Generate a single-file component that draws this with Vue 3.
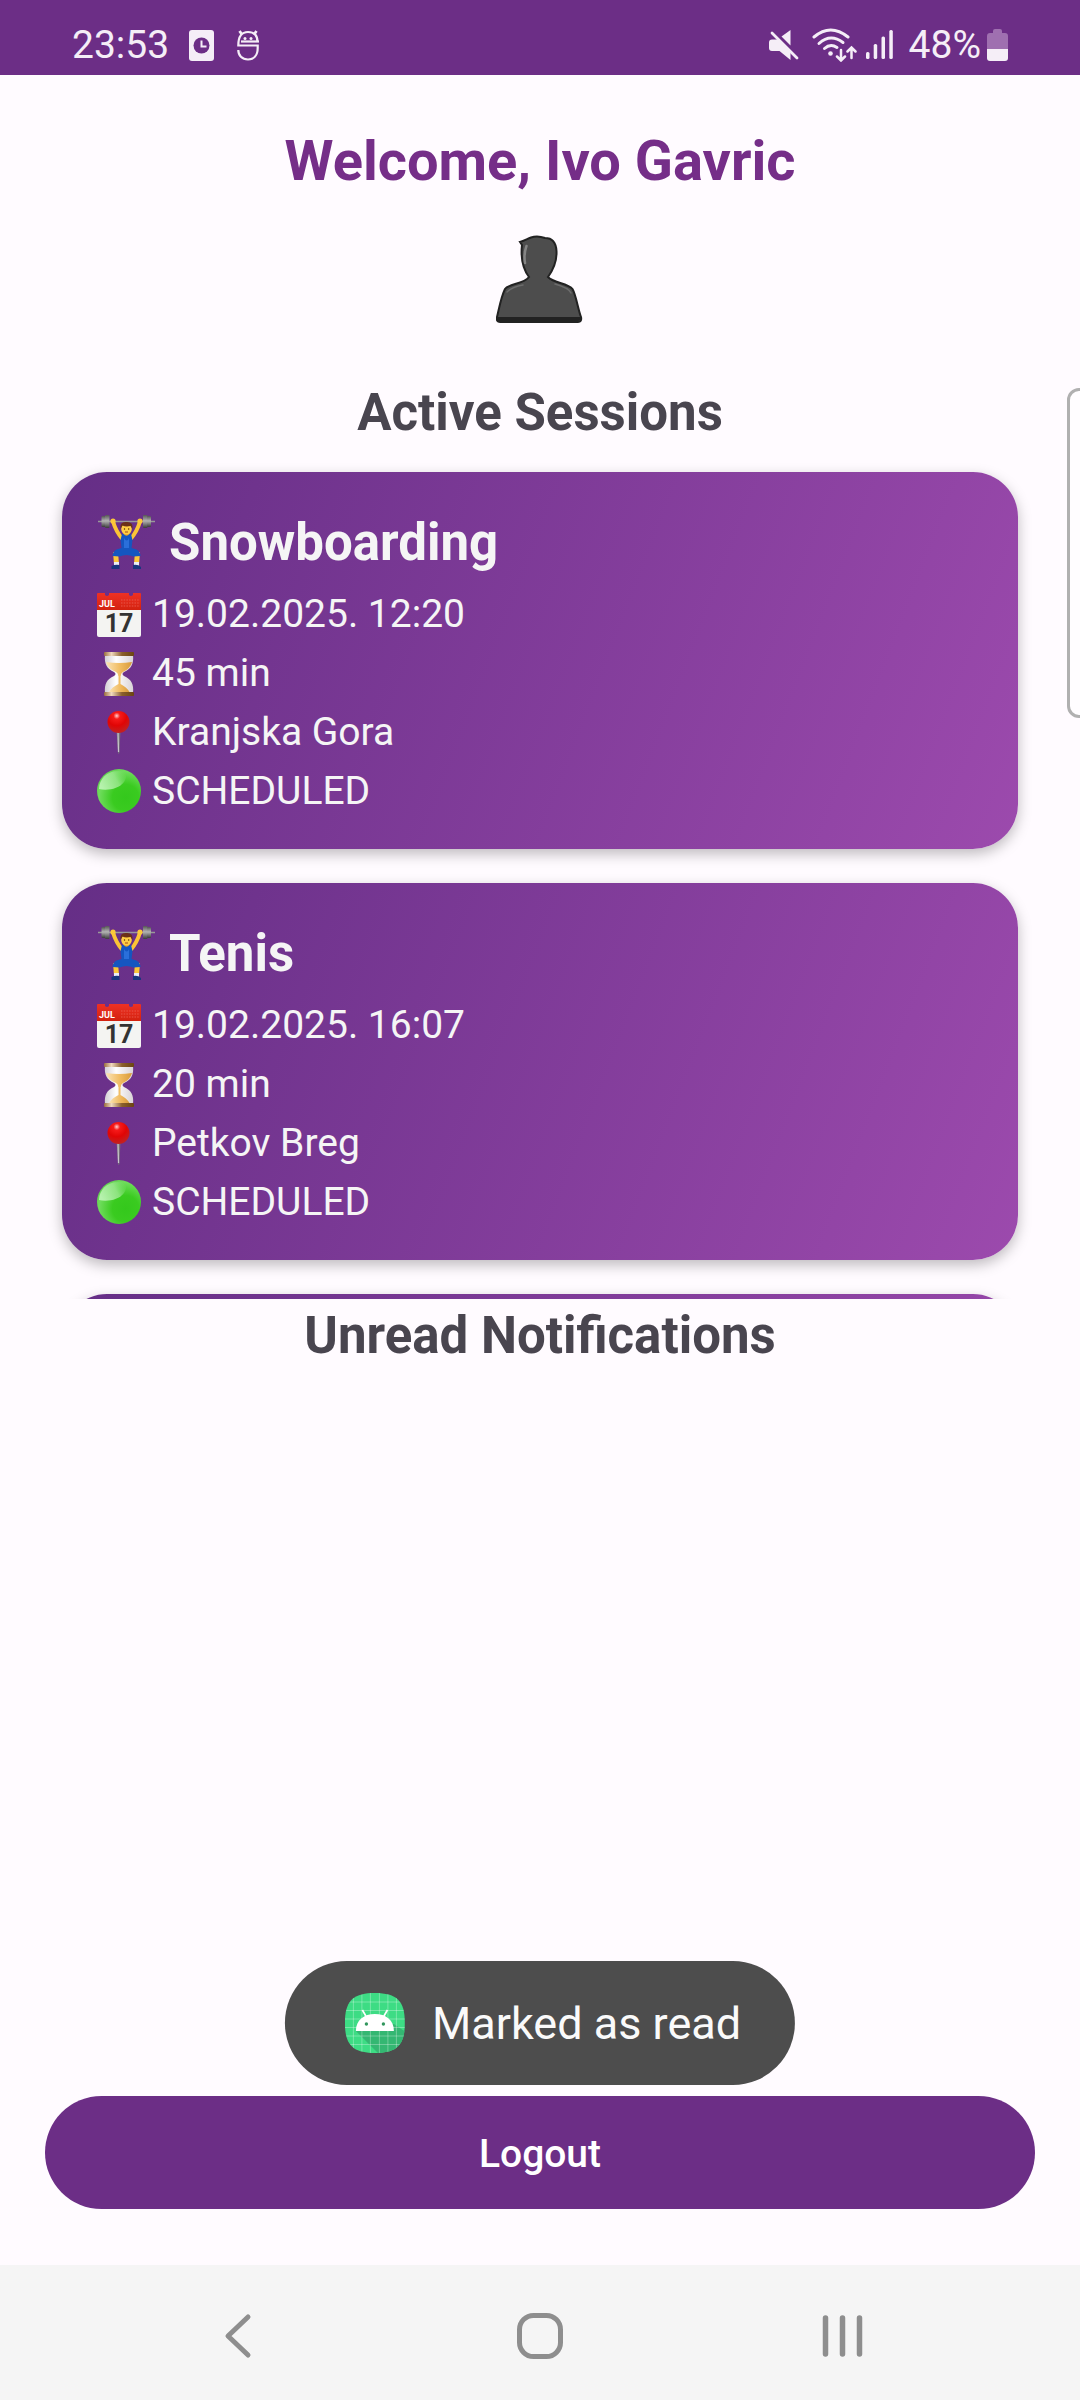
<script setup>
const sessions = [
  { id: 1, name: 'Snowboarding', date: '19.02.2025. 12:20', length: '45 min', place: 'Kranjska Gora', status: 'SCHEDULED' },
  { id: 2, name: 'Tenis', date: '19.02.2025. 16:07', length: '20 min', place: 'Petkov Breg', status: 'SCHEDULED' },
]
const rows = ['date', 'length', 'place', 'status']
</script>

<template>
  <div class="screen">
    <!-- Gradients shared by the card icons -->
    <svg class="defs" width="0" height="0" aria-hidden="true">
      <defs>
        <linearGradient id="weight" x1="0" x2="0" y1="0" y2="1">
          <stop offset="0" stop-color="#555" /><stop offset=".45" stop-color="#b4b4b4" /><stop offset="1" stop-color="#3a3a3a" />
        </linearGradient>
        <linearGradient id="brass" x1="0" x2="1" y1="0" y2="0">
          <stop offset="0" stop-color="#9a6d3f" /><stop offset=".25" stop-color="#f0d9bd" /><stop offset=".6" stop-color="#8a5f2c" /><stop offset="1" stop-color="#6b4412" />
        </linearGradient>
        <linearGradient id="glass" x1="0" x2="1" y1="0" y2="0">
          <stop offset="0" stop-color="#d4cfd4" /><stop offset=".4" stop-color="#fff" /><stop offset="1" stop-color="#d9d3d6" />
        </linearGradient>
        <linearGradient id="sand" x1="0" x2="1" y1="0" y2="0">
          <stop offset="0" stop-color="#fbe3b4" /><stop offset=".55" stop-color="#f0bb60" /><stop offset="1" stop-color="#d99a3a" />
        </linearGradient>
        <radialGradient id="pin" cx=".42" cy=".22" r=".75">
          <stop offset="0" stop-color="#ffd0d0" /><stop offset=".2" stop-color="#f71a1a" /><stop offset=".6" stop-color="#e00505" /><stop offset="1" stop-color="#c22020" />
        </radialGradient>
        <radialGradient id="ball" cx=".65" cy=".65" r=".75">
          <stop offset="0" stop-color="#34c81c" /><stop offset=".4" stop-color="#3acb20" /><stop offset=".8" stop-color="#6fdc5c" /><stop offset="1" stop-color="#5fcb4e" />
        </radialGradient>
        <linearGradient id="shine" x1="0" x2="1" y1=".6" y2=".2">
          <stop offset="0" stop-color="#b6f2ad" /><stop offset=".6" stop-color="#9ce890" stop-opacity=".8" /><stop offset="1" stop-color="#6fdc5e" stop-opacity=".2" />
        </linearGradient>
        <linearGradient id="page" x1="0" x2="0" y1="0" y2="1">
          <stop offset="0" stop-color="#ee3124" /><stop offset="1" stop-color="#d3220f" />
        </linearGradient>
      </defs>
    </svg>

    <header class="status">
      <div class="status-side">
        <time class="clock">23:53</time>
        <svg class="alarm" width="25" height="31" viewBox="0 0 25 31" aria-hidden="true">
          <rect width="25" height="31" rx="3" fill="#f5eef7" />
          <circle cx="12.500" cy="15.500" r="8" fill="#6c2e86" />
          <path d="M12.500 10.500v6h5" fill="none" stroke="#f5eef7" stroke-width="2" />
        </svg>
        <svg width="22" height="31" viewBox="0 0 22 31" aria-hidden="true">
          <g fill="none" stroke="#f5eef7" stroke-width="2.200">
            <path d="M20.500 12C20.500 5 17 2 11 2S1.300 6 1.300 15.500h19.400V18c0 7-3.700 11.500-9.700 11.500S1.300 25.500 1.300 20" />
            <path d="M4 11.500h18" />
            <path d="M2.500 1l2.500 3.500M19.500 1L17 4.500" stroke-width="2.800" />
          </g>
          <circle cx="8" cy="8.500" r="1.500" fill="#f5eef7" /><circle cx="14" cy="8.500" r="1.500" fill="#f5eef7" />
        </svg>
      </div>
      <div class="status-side">
        <svg width="30" height="30" viewBox="0 0 30 30" fill="#f5eef7" aria-hidden="true">
          <path d="M21.500 0v15.500L12.500 6.500z" />
          <path d="M3 9.500h6L21.500 22v8L10.500 21H3q-3 0-3-3v-5.500q0-3 3-3z" />
          <path d="M3 3l25 25" stroke="#f5eef7" stroke-width="2.800" stroke-linecap="round" />
        </svg>
        <svg class="wifi" width="46" height="34" viewBox="0 0 46 34" fill="none" stroke="#f5eef7" stroke-linecap="round" aria-hidden="true">
          <g stroke-width="3">
            <path d="M2 9Q18.500-5 36 9" /><path d="M7 15.500Q18.500 5 31 14.500" /><path d="M12.500 20.500Q18.500 15 25 19.500" />
          </g>
          <circle cx="18.500" cy="25.500" r="2.300" fill="#f5eef7" stroke="none" />
          <path d="M29 22v10M25 28.500l4 4 4-4M39.500 30V20M35.500 23.500l4-4 4 4" stroke-width="2.500" />
        </svg>
        <svg class="signal" width="27" height="30" viewBox="0 0 27 30" fill="#f5eef7" aria-hidden="true">
          <rect y="22" width="3.500" height="7" rx="1.500" /><rect x="7.700" y="14" width="3.500" height="15" rx="1.500" />
          <rect x="15.500" y="6.500" width="3.500" height="22.500" rx="1.500" /><rect x="23.300" width="3.500" height="29" rx="1.500" />
        </svg>
        <span>48%</span>
        <svg class="battery" width="21" height="32" viewBox="0 0 21 32" aria-hidden="true">
          <path d="M6 4V2q0-2 2-2h5q2 0 2 2v2h3q3 0 3 3v13H0V7q0-3 3-3z" fill="#9f70b0" />
          <path d="M0 20h21v9q0 3-3 3H3q-3 0-3-3z" fill="#f5eef7" />
        </svg>
      </div>
    </header>

    <main class="content">
      <h1>Welcome, Ivo Gavric</h1>
      <svg class="avatar" width="88" height="88" viewBox="0 0 88 88" role="img" aria-label="Profile">
        <path d="M24 7C28 6 31 4 35 2.500c4-1.500 10-1 14 .5 7 0 11 5 11.500 13C61 26 57 35 52 42c5 6 20 6 24.500 12C80 60 82 74 85 82q1 5-3 5H4q-4 0-3-5C3 74 5 62 9 54c3-5 19-5 24-12C27 34 24.500 24 26 10z" fill="#4d4d4d" stroke="#222" stroke-width="2" />
        <path d="M1 82h84q0 4-3 4H4q-4 0-3-4z" fill="#222" />
        <path d="M30.500 11q-3 8-1.500 17" fill="none" stroke="#858585" stroke-width="2.500" stroke-linecap="round" />
        <path d="M11 57q5-5 16-7M59 49q14 4 16 9" fill="none" stroke="#6c6c6c" stroke-width="1.500" stroke-linecap="round" />
      </svg>

      <h2 class="first">Active Sessions</h2>
      <section class="list" aria-label="Active Sessions">
        <article v-for="s in sessions" :key="s.id" class="card">
          <h3>
            <svg width="60" height="56" viewBox="0 0 60 56" aria-hidden="true">
              <path d="M2 6.500h57" stroke="#999" stroke-width="1.500" />
              <g fill="url(#weight)">
                <rect x="5.500" y="1" width="4" height="11" rx="1" /><rect x="9" y="0" width="4.500" height="13" rx="1" />
                <rect x="47" y="0" width="4.500" height="13" rx="1" /><rect x="51" y="1" width="4" height="11" rx="1" />
              </g>
              <path d="M17 6.500q3 10 9 17M44 6.500q-3 10-9 17" fill="none" stroke="#fcc436" stroke-width="4" stroke-linecap="round" />
              <circle cx="17" cy="6" r="2.600" fill="#fcc83a" /><circle cx="44" cy="6" r="2.600" fill="#fcc83a" />
              <path d="M27.500 17h6v6h-6z" fill="#e89e1f" />
              <ellipse cx="30.500" cy="14" rx="5.300" ry="5.500" fill="#ffcd43" />
              <path d="M24.500 14q-1-7 5-7 8-1 7 7l-2-3q-5 1-8-.5z" fill="#6b3018" />
              <path d="M29 17h3" stroke="#a34b1a" stroke-width="1" /><circle cx="28.500" cy="14" r=".7" fill="#4a2509" /><circle cx="32.700" cy="14" r=".7" fill="#4a2509" />
              <path d="M19.500 37l1 12M41.500 37l-1 12" stroke="#fcc83a" stroke-width="5" />
              <path d="M26 19h1.500q3 3.500 6 0H35l1.500 6-1 8 5 1.500q4 2.500 4 6.500l-7 .5q-3.500-1.500-7-1.500t-7 1.500l-7-.5q0-4 4-6.500l5-1.500-1-8z" fill="#1556c0" />
              <path d="M28 23q3 5 5 0v10h-5z" fill="#2a6fda" />
              <path d="M18 47h5v4h-5zM38 47h5v4h-5z" fill="#e9edf6" />
              <path d="M15.500 51q4-2 8-1v4h-8zM37 50q5-1 8 2v2h-8z" fill="#19357f" />
            </svg>
            {{ s.name }}
          </h3>
          <p v-for="row in rows" :key="row">
            <svg v-if="row === 'date'" width="46" height="46" viewBox="0 0 46 46" aria-hidden="true">
              <path d="M1 17h44v26q0 2-2 2H3q-2 0-2-2z" fill="#f4f4f2" />
              <path d="M1 2q0-1 1-1h7v2q2 2 4 0V1h20v2q2 2 4 0V1h7q1 0 1 1v16H1z" fill="url(#page)" />
              <path d="M25 8h19M25 11h19M25 14h19" stroke="#e8574a" stroke-width="1" stroke-dasharray="1.500 1.200" />
              <text x="3" y="15" font-size="9" font-weight="700" fill="#fff">JUL</text>
              <text x="23" y="40" text-anchor="middle" font-size="25" font-weight="700" fill="#333">17</text>
            </svg>
            <svg v-else-if="row === 'length'" width="46" height="46" viewBox="0 0 46 46" aria-hidden="true">
              <path d="M9 4h28c1 9-2 14-9 17q-3 2 0 4c7 3 10 8 9 17H9c-1-9 2-14 9-17q3-2 0-4C11 18 8 13 9 4z" fill="url(#glass)" />
              <path d="M10 11q13 2 26 0-2 7-9 10-2 1-2.500 4h-2q-.5-3-2.500-4-8-3-10-10z" fill="url(#sand)" />
              <path d="M22.500 22h2v11q6 3 9 8H13q3-5 9.500-8z" fill="url(#sand)" />
              <rect x="8" y="1" width="30" height="4" rx="1" fill="url(#brass)" /><rect x="8" y="41" width="30" height="4" rx="1" fill="url(#brass)" />
            </svg>
            <svg v-else-if="row === 'place'" width="46" height="46" viewBox="0 0 46 46" aria-hidden="true">
              <path d="M20.500 20h4l-1 22q-.8 4-1.500 0z" fill="#76727a" /><path d="M22 21l.5 21" stroke="#c9c6cc" stroke-width="1.200" />
              <circle cx="22.500" cy="12" r="11" fill="url(#pin)" />
            </svg>
            <svg v-else width="46" height="46" viewBox="0 0 46 46" aria-hidden="true">
              <circle cx="23" cy="22" r="22" fill="url(#ball)" />
              <path d="M3 20C3 10 11 2 22 2c8 0 10 5 6 11-5 7-17 9-25 7z" fill="url(#shine)" />
            </svg>
            {{ s[row] }}
          </p>
        </article>
        <article class="card pending" aria-hidden="true"></article>
      </section>

      <h2>Unread Notifications</h2>
      <section class="notifications" aria-label="Unread Notifications"></section>

      <div class="footer">
        <div class="toast" role="status">
          <svg width="60" height="60" viewBox="0 0 60 60" aria-hidden="true">
            <defs><clipPath id="launcher-shape"><path d="M30 0C52 0 60 8 60 30S52 60 30 60 0 52 0 30 8 0 30 0z" /></clipPath></defs>
            <g clip-path="url(#launcher-shape)">
              <path d="M0 0h60v60H0z" fill="#3ddc84" />
              <path d="M11 38L40 67h30V45L49 31z" fill="#34b772" />
              <path d="M8.500 0v60M17 0v60M25.500 0v60M34.500 0v60M43 0v60M51.500 0v60M0 9h60M0 17.500h60M0 26h60M0 34.500h60M0 43h60M0 51.500h60" stroke="#fff" stroke-opacity=".3" stroke-width="1" />
              <path d="M17.500 17l4 7M42.500 17l-4 7" stroke="#fff" stroke-width="1.700" />
              <path d="M11 38C11 27 19 21 30 21s19 6 19 17z" fill="#fff" />
              <circle cx="21.500" cy="31" r="1.700" fill="#32965d" /><circle cx="38.500" cy="31" r="1.700" fill="#32965d" />
            </g>
          </svg>
          <span>Marked as read</span>
        </div>
        <button class="logout" type="button">Logout</button>
      </div>
    </main>

    <nav class="navbar" aria-label="System navigation">
      <button type="button" aria-label="Back">
        <svg width="48" height="48" viewBox="0 0 48 48"><path d="M34 5L14 24l20 19" fill="none" stroke="#8e8e8e" stroke-width="5" stroke-linecap="round" stroke-linejoin="round" /></svg>
      </button>
      <button type="button" aria-label="Home">
        <svg width="48" height="48" viewBox="0 0 48 48"><rect x="3.500" y="3.500" width="41" height="41" rx="14" fill="none" stroke="#8e8e8e" stroke-width="5" /></svg>
      </button>
      <button type="button" aria-label="Recent apps">
        <svg width="48" height="48" viewBox="0 0 48 48"><path d="M7.500 6v36M24.500 6v36M41.500 6v36" stroke="#8e8e8e" stroke-width="5.500" stroke-linecap="round" /></svg>
      </button>
    </nav>

    <div class="edge-handle" aria-hidden="true"></div>
  </div>
</template>

<style>
body {
  background: #fffbff;
}
</style>

<style scoped>
.screen {
  position: relative;
  display: flex;
  flex-direction: column;
  min-height: 100vh;
  overflow: hidden;
  background: #fffbff;
  color: #49454f;
  font-family: Roboto, "Noto Sans", sans-serif;
}
.defs {
  position: absolute;
}
svg {
  flex: none;
  display: block;
}
h1,
h2,
h3,
p {
  margin: 0;
}
button {
  border: 0;
  padding: 0;
  font-family: inherit;
}

.status {
  box-sizing: border-box;
  height: 75px;
  padding: 15px 72px 0;
  display: flex;
  align-items: center;
  justify-content: space-between;
  background: #6c2e86;
  color: #f5eef7;
  font-size: 39px;
  line-height: 48px;
}
.status-side {
  display: flex;
  align-items: center;
}
.alarm {
  margin: 0 23px 0 20px;
}
.wifi {
  margin: 0 8px 0 13px;
}
.signal {
  margin-right: 16px;
}
.battery {
  margin-left: 6px;
}

.content {
  flex: 1;
  display: flex;
  flex-direction: column;
  padding: 53px 45px 56px;
}
h1 {
  color: #752e88;
  font-size: 56px;
  line-height: 66px;
  text-align: center;
}
.avatar {
  margin: 41px auto 0;
}
h2 {
  padding: 7px 0 12px;
  font-size: 51px;
  line-height: 60px;
  text-align: center;
}
.first {
  margin-top: 53px;
}
.list {
  display: flex;
  flex-direction: column;
  max-height: 844px;
  overflow: hidden;
}
.card {
  flex: none;
  margin: 17px;
  padding: 29px 34px 28px;
  border-radius: 45px;
  background: linear-gradient(111deg, #652e86, #9c4aad);
  box-shadow: 0 5px 14px rgba(0, 0, 0, 0.26);
  color: #f5f5f5;
}
.pending {
  min-height: 320px;
}
h3 {
  display: flex;
  align-items: center;
  gap: 13px;
  font-size: 51px;
  line-height: 84px;
}
p {
  display: flex;
  align-items: center;
  gap: 10px;
  font-size: 39px;
  line-height: 59px;
}
.notifications {
  flex: 1;
}

.footer {
  position: relative;
}
.toast {
  position: absolute;
  bottom: 124px;
  left: 50%;
  transform: translateX(-50%);
  box-sizing: border-box;
  height: 124px;
  padding: 0 54px 0 60px;
  display: flex;
  align-items: center;
  gap: 27px;
  border-radius: 62px;
  background: #4d4d4d;
  color: #fafafa;
  font-size: 45px;
  white-space: nowrap;
}
.logout {
  display: block;
  width: 100%;
  height: 113px;
  padding-top: 3px;
  border-radius: 57px;
  background: #6c2e86;
  color: #fff;
  font-size: 39px;
  font-weight: 500;
}

.navbar {
  box-sizing: border-box;
  height: 135px;
  padding: 6px 8% 0;
  display: grid;
  grid-template-columns: repeat(3, 1fr);
  align-items: center;
  justify-items: center;
  background: #f5f5f5;
}
.navbar button {
  padding: 12px;
  background: none;
}

.edge-handle {
  position: absolute;
  top: 388px;
  right: -12px;
  box-sizing: border-box;
  width: 25px;
  height: 330px;
  border: 3px solid #b0b0b0;
  border-radius: 12px;
  background: #fffdff;
}
</style>
